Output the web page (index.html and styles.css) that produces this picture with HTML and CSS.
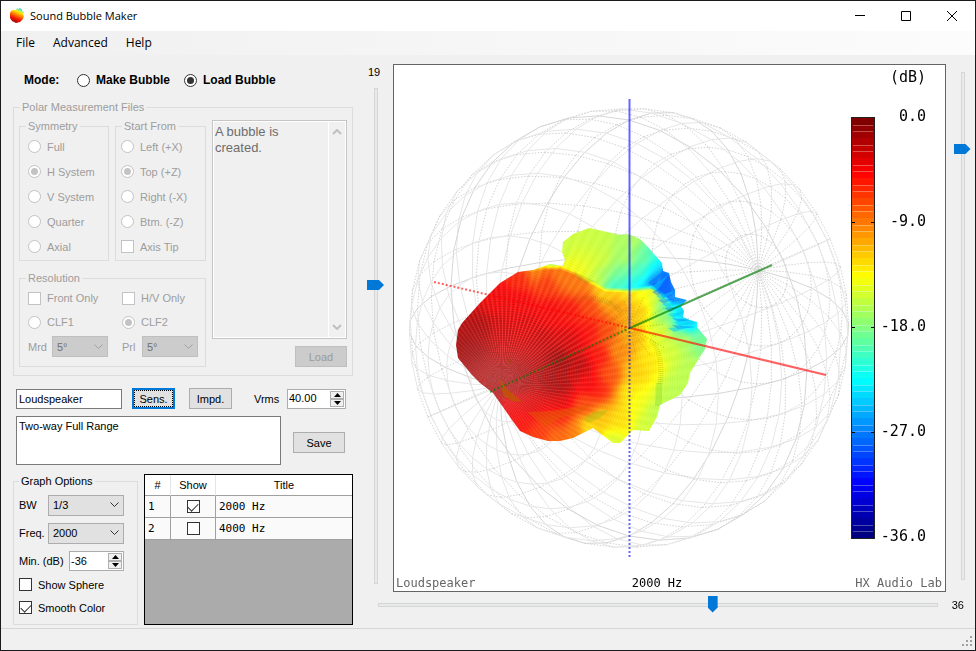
FILE: index.html
```html
<!DOCTYPE html>
<html lang="en">
<head>
<meta charset="utf-8">
<title>Sound Bubble Maker</title>
<link rel="stylesheet" href="styles.css">
</head>
<body>
<div class="window">
  <header class="titlebar">
    <svg class="app-icon" width="16" height="16" viewBox="0 0 16 16" aria-hidden="true">
      <defs>
        <linearGradient id="appFill" x1="0.75" y1="0" x2="0.35" y2="1">
          <stop offset="0" stop-color="#20c0f0"/><stop offset=".14" stop-color="#80f0a0"/>
          <stop offset=".28" stop-color="#ffe800"/><stop offset=".5" stop-color="#ff7a00"/>
          <stop offset=".72" stop-color="#f01808"/><stop offset="1" stop-color="#a00000"/>
        </linearGradient>
      </defs>
      <path fill="url(#appFill)" d="M2 3 4 2 7 2 8 0 9 1 11 0 12 1 13 1 13 3 15 4 14 6 15 8 14 11 11 14 7 15 3 13 1 10 1 5Z"/>
    </svg>
    <h1 class="title">Sound Bubble Maker</h1>
    <div class="caption-buttons">
      <button type="button" aria-label="Minimize"><svg width="12" height="12"><path d="M1 5.500h10"/></svg></button>
      <button type="button" aria-label="Maximize"><svg width="12" height="12"><path d="M1.500 1.500h9v9h-9z"/></svg></button>
      <button type="button" aria-label="Close"><svg width="12" height="12"><path d="M1 1l10 10M11 1L1 11"/></svg></button>
    </div>
  </header>
  <nav class="menubar">
    <button type="button">File</button>
    <button type="button">Advanced</button>
    <button type="button">Help</button>
  </nav>
  <main class="workspace">
    <form class="controls">
      <div class="mode" role="radiogroup" aria-labelledby="modeLabel">
        <span id="modeLabel" class="mode-label">Mode:</span>
        <label><input type="radio" name="mode">Make Bubble</label>
        <label><input type="radio" name="mode" checked>Load Bubble</label>
      </div>

      <fieldset class="group polar" disabled>
        <legend>Polar Measurement Files</legend>
        <div class="polar-grid">
          <div class="polar-options">
            <fieldset class="group">
              <legend>Symmetry</legend>
              <label><input type="radio" name="sym">Full</label>
              <label><input type="radio" name="sym" checked>H System</label>
              <label><input type="radio" name="sym">V System</label>
              <label><input type="radio" name="sym">Quarter</label>
              <label><input type="radio" name="sym">Axial</label>
            </fieldset>
            <fieldset class="group start">
              <legend>Start From</legend>
              <label><input type="radio" name="start">Left (+X)</label>
              <label><input type="radio" name="start" checked>Top (+Z)</label>
              <label><input type="radio" name="start">Right (-X)</label>
              <label><input type="radio" name="start">Btm. (-Z)</label>
              <label><input type="checkbox">Axis Tip</label>
            </fieldset>
            <fieldset class="group resolution">
              <legend>Resolution</legend>
              <label><input type="checkbox">Front Only</label>
              <label><input type="checkbox">H/V Only</label>
              <label><input type="radio" name="clf">CLF1</label>
              <label><input type="radio" name="clf" checked>CLF2</label>
              <div class="pick"><label for="mrd">Mrd</label><select id="mrd"><option>5°</option></select></div>
              <div class="pick"><label for="prl">Prl</label><select id="prl"><option>5°</option></select></div>
            </fieldset>
          </div>
          <div class="log">
            <div class="log-box">
              <textarea aria-label="Messages" readonly>A bubble is created.</textarea>
              <div class="log-scroll" aria-hidden="true">
                <svg width="10" height="6"><path d="M1 5l4-4 4 4"/></svg>
                <svg width="10" height="6"><path d="M1 1l4 4 4-4"/></svg>
              </div>
            </div>
            <button type="button" class="btn btn-wide">Load</button>
          </div>
        </div>
      </fieldset>

      <div class="name-row">
        <input class="field name-field" type="text" value="Loudspeaker" aria-label="Name">
        <button type="button" class="btn btn-focus">Sens.</button>
        <button type="button" class="btn">Impd.</button>
        <label for="vrms">Vrms</label>
        <span class="spinner">
          <input id="vrms" type="text" value="40.00">
          <span class="steps">
            <button type="button" aria-label="Increase voltage"><svg width="7" height="4"><path d="M0 4L3.500 0L7 4Z"/></svg></button>
            <button type="button" aria-label="Decrease voltage"><svg width="7" height="4"><path d="M0 0L3.500 4L7 0Z"/></svg></button>
          </span>
        </span>
      </div>
      <div class="note-row">
        <textarea class="field note" aria-label="Description">Two-way Full Range</textarea>
        <button type="button" class="btn btn-wide">Save</button>
      </div>

      <div class="bottom-row">
        <fieldset class="group graph-options">
          <legend>Graph Options</legend>
          <div class="option"><label for="bw">BW</label><select id="bw"><option>1/3</option></select></div>
          <div class="option"><label for="freq">Freq.</label><select id="freq"><option>2000</option></select></div>
          <div class="option">
            <label for="min">Min. (dB)</label>
            <span class="spinner spinner-small">
              <input id="min" type="text" value="-36">
              <span class="steps">
                <button type="button" aria-label="Increase minimum"><svg width="7" height="4"><path d="M0 4L3.500 0L7 4Z"/></svg></button>
                <button type="button" aria-label="Decrease minimum"><svg width="7" height="4"><path d="M0 0L3.500 4L7 0Z"/></svg></button>
              </span>
            </span>
          </div>
          <label><input type="checkbox">Show Sphere</label>
          <label><input type="checkbox" checked>Smooth Color</label>
        </fieldset>
        <div class="list">
          <table>
            <thead><tr><th class="col-num">#</th><th class="col-show">Show</th><th>Title</th></tr></thead>
            <tbody>
              <tr><td>1</td><td class="tick"><input type="checkbox" checked aria-label="Show 2000 Hz"></td><td>2000 Hz</td></tr>
              <tr><td>2</td><td class="tick"><input type="checkbox" aria-label="Show 4000 Hz"></td><td>4000 Hz</td></tr>
            </tbody>
          </table>
        </div>
      </div>
    </form>

    <div class="side-slider">
      <label for="elevation">19</label>
      <input id="elevation" class="slider vertical" type="range" min="-90" max="90" value="19">
    </div>

    <section class="plot" aria-label="Sound bubble">
      <canvas id="bubble" width="551" height="526"></canvas>
      <svg viewBox="394 65 551 526" role="img" aria-label="Axes and level scale">
        <g class="axes">
          <path class="axis-x dotted" d="M434 282 630 328"/>
          <path class="axis-y dotted" d="M490 392 630 328"/>
          <path class="axis-z dotted" d="M629.500 557V328"/>
          <path class="axis-x" d="M630 328 826 375"/>
          <path class="axis-y" d="M630 328 772 265"/>
          <path class="axis-z" d="M629.500 328V99"/>
        </g>
        <g id="scale"></g>
        <g class="scale-text">
          <text x="926" y="82">(dB)</text>
          <text x="926" y="121">0.0</text>
          <text x="926" y="226">-9.0</text>
          <text x="926" y="331">-18.0</text>
          <text x="926" y="436">-27.0</text>
          <text x="926" y="541">-36.0</text>
        </g>
        <g class="caption-text">
          <text x="396" y="587">Loudspeaker</text>
          <text class="strong" x="657" y="587" text-anchor="middle">2000 Hz</text>
          <text x="942" y="587" text-anchor="end">HX Audio Lab</text>
        </g>
      </svg>
    </section>

    <div class="side-slider zoom">
      <input class="slider vertical" type="range" min="0" max="1000" value="857" aria-label="Zoom">
    </div>

    <div class="bottom-slider">
      <input id="azimuth" class="slider horizontal" type="range" min="-180" max="180" value="36">
      <label for="azimuth">36</label>
    </div>
  </main>
  <footer class="statusbar">
    <svg width="12" height="12" aria-hidden="true"><path d="M8 0h2v2h-2zM4 4h2v2h-2zM8 4h2v2h-2zM0 8h2v2h-2zM4 8h2v2h-2zM8 8h2v2h-2z"/></svg>
  </footer>
</div>
<script src="script.js"></script>
</body>
</html>
```
FILE: styles.css
```css
* { box-sizing: border-box; }
body {
  margin: 0;
  font: 11px/14px "Liberation Sans", Arial, sans-serif;
  color: #000;
  background: #f0f0f0;
}
button, input, select, textarea { font: inherit; color: inherit; margin: 0; }
.window {
  min-height: 100vh;
  border: 1px solid #1b1a1e;
  display: flex;
  flex-direction: column;
}

/* title bar and menu */
.titlebar { display: flex; align-items: center; height: 30px; padding-left: 8px; background: #fff; }
.title { flex: 1; margin: 0 0 0 5px; font: 11px/16px "Open Sans", "Noto Sans", sans-serif; }
.caption-buttons { display: flex; }
.caption-buttons button { width: 46px; height: 30px; padding: 0; border: 0; background: none; display: grid; place-items: center; }
.caption-buttons path { fill: none; stroke: #000; }
.menubar { display: flex; height: 24px; padding-left: 7px; background: linear-gradient(to right, #f0f0f0, #fcfcfc); }
.menubar button { border: 0; padding: 0 8px; margin-right: 2px; background: none; font: 12px/16px "Open Sans", "Noto Sans", sans-serif; }

.workspace {
  flex: 1;
  display: grid;
  grid-template-columns: 352px 40px minmax(0, 1fr) 29px;
  grid-template-rows: auto 1fr;
  align-items: start;
}
.controls { grid-row: 1 / 3; padding: 15px 0 0 12px; }

/* tick boxes and radios */
label { display: flex; align-items: center; }
input[type="radio"], input[type="checkbox"] {
  appearance: none;
  flex: none;
  width: 13px;
  height: 13px;
  margin-right: 6px;
  border: 1px solid #333;
  background: #fff;
  display: grid;
  place-items: center;
}
input[type="radio"] { border-radius: 50%; }
input[type="radio"]:checked::before { content: ""; width: 7px; height: 7px; border-radius: 50%; background: #333; }
input[type="checkbox"]:checked::before {
  content: "";
  width: 9px;
  height: 5px;
  border: solid #333;
  border-width: 0 0 1px 1px;
  transform: translateY(-1px) rotate(-45deg);
}
:disabled input[type="radio"], :disabled input[type="checkbox"] { border-color: #c3c3c3; }
:disabled input[type="radio"]:checked::before { background: #c3c3c3; }

.mode { display: flex; align-items: center; height: 20px; padding-left: 11px; font-weight: bold; font-size: 12px; }
.mode-label { width: 53px; }
.mode label { margin-right: 14px; }

.group { margin: 0; min-width: 0; border: 1px solid #dcdcdc; padding: 1px 8px 0; }
.group legend { padding: 0 2px; margin: 0 -2px; line-height: 14px; }
.group:disabled, .group:disabled .group { color: #9d9d9d; }
.polar { margin-top: 10px; padding: 5px 5px 8px; }
.polar > legend { margin: 0 0 0 1px; }
.polar-grid { display: grid; grid-template-columns: 187px minmax(0, 1fr); gap: 6px; }
.polar-options { display: grid; grid-template-columns: 90px 91px; gap: 10px 6px; }
.polar-options label { height: 25px; white-space: nowrap; }
.start { padding-left: 5px; }
.start legend { margin-left: 1px; }
.polar-options .resolution { grid-column: 1 / 3; display: grid; grid-template-columns: 94px 1fr; padding: 1px 7px 7px 8px; }
.resolution label { height: 24px; }
.pick { display: flex; align-items: center; justify-content: space-between; height: 24px; }
.pick:nth-of-type(1) { padding-right: 14px; }

select {
  appearance: none;
  width: 56px;
  height: 21px;
  padding: 0 4px;
  border: 1px solid #adadad;
  border-radius: 0;
  background-color: #e1e1e1;
  background-image: url("data:image/svg+xml,%3Csvg xmlns='http://www.w3.org/2000/svg' width='9' height='6'%3E%3Cpath d='M.5 .5l4 4 4-4' fill='none' stroke='%23333'/%3E%3C/svg%3E");
  background-repeat: no-repeat;
  background-position: right 4px center;
  font-size: 11px;
}
select:disabled {
  background-color: #ccc;
  background-image: url("data:image/svg+xml,%3Csvg xmlns='http://www.w3.org/2000/svg' width='9' height='6'%3E%3Cpath d='M.5 .5l4 4 4-4' fill='none' stroke='%23a0a0a0'/%3E%3C/svg%3E");
  border-color: #bfbfbf;
  color: #707070;
  opacity: 1;
}

.log { display: flex; flex-direction: column; align-items: flex-end; gap: 7px; padding-top: 1px; }
.log-box { display: flex; width: 100%; height: 219px; border: 1px solid #c5c5c5; padding: 1px; box-shadow: inset 0 0 0 1px #fff; }
.log-box textarea { flex: 1; min-width: 0; border: 0; padding: 2px 1px; resize: none; background: none; font-size: 13px; line-height: 16px; color: #6d6d6d; overflow: hidden; }
.log-scroll { width: 17px; border-left: 1px solid #fff; display: flex; flex-direction: column; justify-content: space-between; align-items: center; padding: 7px 0; }
.log-scroll path { fill: none; stroke: #bfbfbf; stroke-width: 2; }

.btn { height: 21px; width: 43px; padding: 0; border: 1px solid #adadad; background: #e1e1e1; }
.btn-wide { width: 52px; }
.btn:disabled { background: #ccc; border-color: #bfbfbf; color: #9a9a9a; }
.btn-focus { border: 2px solid #0078d7; outline: 1px dotted #000; outline-offset: -3px; }
.field { border: 1px solid #7a7a7a; background: #fff; padding: 0 2px; }

.name-row { display: flex; align-items: center; margin-top: 12px; padding-left: 3px; }
.name-field { width: 106px; height: 20px; margin-right: 10px; }
.name-row .btn { margin-right: 14px; }
.name-row label { width: 33px; margin-left: 8px; }
.spinner { display: flex; width: 59px; height: 20px; border: 1px solid #adadad; background: #fff; padding: 1px; }
.spinner-small { width: 55px; }
.spinner input { flex: 1; min-width: 0; width: 0; border: 0; padding: 0 0 1px; background: none; font-size: 11px; }
.steps { display: flex; flex-direction: column; width: 14px; }
.steps button { flex: 1; min-height: 0; padding: 0; border: 1px solid #b0b0b0; background: #f0f0f0; display: grid; place-items: center; line-height: 0; }

.note-row { display: flex; align-items: flex-end; gap: 12px; margin-top: 7px; padding-left: 3px; }
.note-row .btn { margin-bottom: 12px; }
.note { width: 265px; height: 49px; padding: 2px; resize: none; display: block; }

.bottom-row { display: flex; align-items: stretch; gap: 6px; margin-top: 9px; }
.graph-options { width: 125px; padding: 3px 5px 5px; }
.graph-options > legend { margin-left: 0; }
.option { display: flex; align-items: center; justify-content: space-between; height: 28px; padding-right: 8px; }
.option select { width: 76px; }
.graph-options > label { height: 23px; }
.option + label { margin-top: -2px; }
.list { flex: 1; border: 1px solid #000; background: #ababab; }
.list table { width: 100%; border-collapse: separate; border-spacing: 0; table-layout: fixed; }
.list th { height: 21px; padding: 0; background: #fff; font-weight: normal; border-right: 1px solid #e5e5e5; border-bottom: 1px solid #a0a0a0; }
.list td { height: 22px; padding: 0 3px; background: #fafafa; font: 11px/14px "DejaVu Sans Mono", monospace; border-right: 1px solid #a0a0a0; border-bottom: 1px solid #a0a0a0; }
.list tr > :last-child { border-right: 0; }
.col-num { width: 26px; }
.col-show { width: 45px; }
.list .tick input { margin: 0 auto; }

/* sliders */
.slider { appearance: none; margin: 0; background: none; display: block; }
.slider::-webkit-slider-runnable-track { background: #e7eaea; border: 1px solid #d6d6d6; }
.slider::-webkit-slider-thumb { appearance: none; background: #0078d7; }
.vertical { writing-mode: vertical-lr; direction: rtl; width: 17px; }
.vertical::-webkit-slider-runnable-track { width: 4px; }
.vertical::-webkit-slider-thumb { width: 17px; height: 10px; margin-left: -8px; clip-path: polygon(0 0, 12px 0, 100% 50%, 12px 100%, 0 100%); }
.horizontal { height: 17px; flex: 1; min-width: 0; }
.horizontal::-webkit-slider-runnable-track { height: 4px; }
.horizontal::-webkit-slider-thumb { width: 10px; height: 17px; margin-top: -8px; clip-path: polygon(0 0, 100% 0, 100% 12px, 50% 100%, 0 12px); }
.side-slider { display: flex; flex-direction: column; align-items: center; align-self: stretch; padding: 10px 0 8px 6px; gap: 9px; font-size: 11px; }
.side-slider .slider { flex: 1; min-height: 0; }
.side-slider label { margin-right: 4px; }
.side-slider.zoom { padding: 17px 0 12px 4px; }
.bottom-slider { grid-column: 2 / 5; display: flex; align-items: center; gap: 14px; padding: 4px 11px 0 25px; font-size: 11px; }

/* plot */
.plot { display: grid; margin-top: 9px; border: 1px solid #646464; background: #fff; }
.plot canvas, .plot svg { grid-area: 1 / 1; display: block; width: 100%; height: auto; }
.axes path { fill: none; stroke-width: 2; }
.axes .dotted { stroke-dasharray: 2 2; }
.axis-x { stroke: #ff0000; stroke-opacity: .62; }
.axis-y { stroke: #007d00; stroke-opacity: .66; }
.axis-z { stroke: #0000ff; stroke-opacity: .6; }
.scale-text text { font: 15px "DejaVu Sans Mono", monospace; text-anchor: end; }
.caption-text text { font: 12px "DejaVu Sans Mono", monospace; fill: #666; }
.caption-text .strong { fill: #000; }

.statusbar { display: flex; justify-content: flex-end; align-items: flex-end; height: 22px; border-top: 1px solid #d7d7d7; padding: 0 1px 2px; }
.statusbar path { fill: #a0a0a0; }
```
FILE: script.js
```js
// Colour map: level 0 (loudest) to 36 dB down, dark red through blue.
function jet(level) {
  const t = 1 - level / 36;
  const ramp = (c) => Math.max(0, Math.min(1, 1.5 - Math.abs(4 * t - c))) * 255;
  return [ramp(3), ramp(2), ramp(1)];
}

const canvas = document.getElementById('bubble');
const ctx = canvas.getContext('2d');
const OX = 394, OY = 65;
ctx.translate(-OX, -OY);

// Orthographic view of the reference sphere.
const AZ = 36 * Math.PI / 180, EL = 19 * Math.PI / 180, R = 220, CX = 629, CY = 328;
function project(x, y, z) {
  const px = x * Math.cos(AZ) + y * Math.sin(AZ);
  const depth = x * Math.sin(AZ) - y * Math.cos(AZ);
  return {
    x: CX + R * px,
    y: CY + R * (depth * Math.sin(EL) - z * Math.cos(EL)),
    front: depth * Math.cos(EL) + z * Math.sin(EL) > 0
  };
}
function polyline(fn, strong) {
  for (let i = 0; i < 36; i++) {
    const a = project(...fn(i * 10)), b = project(...fn(i * 10 + 10));
    const front = a.front && b.front;
    ctx.beginPath();
    ctx.moveTo(a.x, a.y);
    ctx.lineTo(b.x, b.y);
    ctx.setLineDash(strong || front ? [] : [1.5, 1.5]);
    ctx.strokeStyle = strong ? '#d6d6d6' : front ? '#e6e6e6' : '#d2d2d2';
    ctx.lineWidth = 1;
    ctx.stroke();
  }
}
const s = (d) => Math.sin(d * Math.PI / 180), c = (d) => Math.cos(d * Math.PI / 180);
for (let m = 0; m < 180; m += 10) {
  polyline((t) => [s(t) * c(m), c(t), s(t) * s(m)], m % 90 === 0);
}
for (let p = 10; p < 180; p += 10) {
  polyline((t) => [s(p) * c(t), c(p), s(p) * s(t)], p === 90);
}

// Bubble silhouette.
const outline = [563,242,573,234,589,228,603,231,620,235,628,234,640,239,648,247,653,253,662,263,
  663,271,669,273,671,282,675,290,675,297,687,300,681,306,684,311,683,317,690,320,697,322,697,327,
  707,339,705,349,690,373,688,383,680,395,660,405,657,417,649,431,633,430,626,437,620,443,613,443,
  605,437,593,428,587,431,573,438,560,441,548,441,533,437,520,431,512,420,503,407,493,393,480,383,
  472,375,458,358,456,345,458,330,462,323,480,303,500,283,518,272,533,270,550,264,563,266,565,260,562,252];

// Level samples: x, y, dB down. The rear lobe rises behind the main body.
const body = [500,385,1,470,350,1,480,330,1.5,560,360,.8,580,365,2,560,385,1.4,540,340,2.6,520,300,4.2,
  500,300,4,500,330,3,545,283,6,520,279,5.5,570,310,4.8,590,330,4.6,600,355,4.8,588,305,6.5,605,330,6.8,620,305,9.5,
  575,283,8.5,560,274,8.5,598,388,5.2,610,375,7,618,350,9.2,632,335,10.8,640,310,11.3,650,360,12.6,630,390,12.7,
  620,420,12.3,600,418,11.5,613,440,15,645,425,15.3,660,330,14.5,670,350,15,690,370,16,680,385,16,705,345,18,
  700,335,19,690,324,25,680,314,25,665,318,17,675,300,24,665,300,20,655,298,14.5,
  603,292,12,625,295,12.6,645,294,13.5,535,272,9,520,420,4.8,540,432,6.2,555,437,8,
  575,430,8.5,587,427,13,560,415,5.6,530,405,3.6,510,405,4.4,560,403,3.2,585,405,6.8,655,410,16,640,400,14,
  670,395,16,685,340,16,550,380,1.2,520,380,1.2,635,370,11.8,525,325,3.4,550,310,4.4,570,340,3,590,385,3.8];
const lobe = [580,240,15.3,575,255,14.6,600,240,15.5,630,240,16.3,625,258,16.3,600,258,15.2,645,258,18,652,258,21,
  566,250,15.6,570,264,13.5,582,270,13.8,596,280,15,590,262,14.6,657,266,24,665,277,29,652,282,28,665,290,29,
  641,273,20,630,283,21.5,612,285,21,603,275,17,675,295,26,625,272,18.5,640,286,23,550,268,17,540,269,14,530,272,10];
function levelAt(list, x, y) {
  let sum = 0, weight = 0;
  for (let i = 0; i < list.length; i += 3) {
    const d = (x - list[i]) ** 2 + (y - list[i + 1]) ** 2 + 100;
    const w = 1 / (d * d);
    sum += w * list[i + 2];
    weight += w;
  }
  return sum / weight;
}
// Crest of the main body, below which it hides the rear lobe.
const crest = [454,226,515,260,530,270,545,267,560,267,575,273,590,282,605,289,630,290,652,287,662,294,672,303,710,306];
function crestY(x) {
  for (let i = 2; i < crest.length; i += 2) {
    if (x <= crest[i]) {
      const t = (x - crest[i - 2]) / (crest[i] - crest[i - 2]);
      return crest[i - 1] + t * (crest[i + 1] - crest[i - 1]);
    }
  }
  return 306;
}

ctx.save();
ctx.beginPath();
for (let i = 0; i < outline.length; i += 2) ctx.lineTo(outline[i], outline[i + 1]);
ctx.closePath();
ctx.clip();
const PX = 501, PY = 384;
for (let y = 226; y < 446; y++) {
  for (let x = 454; x < 710; x++) {
    const k = Math.max(0, Math.min(1, (y - crestY(x)) / 5 + .5));
    const level = k * levelAt(body, x, y) + (1 - k) * levelAt(lobe, x, y);
    const rgb = jet(level);
    const dx = x - PX, dy = y - PY, r = Math.hypot(dx, dy), a = Math.atan2(dy, dx);
    // Mesh lines fan out from the front pole and ring around it.
    const spokes = Math.sin(a * 110 + r * .05);
    const rings = Math.sin(r * 2.6 + Math.sin(a * 3) * 9);
    const red = Math.exp(-(((x - 525) / 65) ** 2) - ((y - 348) / 60) ** 2);
    const shade = 1 + (spokes * .1 + rings * .12) * (.15 + red);
    const haze = .55 * Math.exp(-((x - 495) ** 2) / 2400 - ((y - 378) ** 2) / 1300);
    const light = (Math.max(0, spokes) * .1 * (.3 + red) + .07) * (1 - haze);
    const out = rgb.map((v, i) => {
      const base = v * shade * (1 - haze) + (i ? 100 : 200) * haze;
      return Math.round(Math.min(255, base + (255 - base) * light));
    });
    ctx.fillStyle = `rgb(${out})`;
    ctx.fillRect(x, y, 1, 1);
  }
}

// Folds and shadows.
function patch(points, fill) {
  ctx.beginPath();
  for (let i = 0; i < points.length; i += 2) ctx.lineTo(points[i], points[i + 1]);
  ctx.fillStyle = fill;
  ctx.fill();
}
patch([500,379,506,388,513,394,522,402,512,401,504,396,501,388], 'rgba(190,90,0,.75)');
patch([507,357,511,362,512,364,508,362], 'rgba(150,70,0,.6)');
patch([527,412,550,411,570,408,591,405,580,413,560,418,545,427], 'rgba(225,95,0,.45)');
patch([584,418,594,412,609,410,600,418,588,423], 'rgba(160,190,20,.4)');
patch([656,383,662,383,662,406,655,406], 'rgba(90,200,40,.25)');
patch([662,268,668,276,671,290,664,299,656,290,653,283,660,283], 'rgba(0,100,255,.45)');
patch([574,272,582,275,596,282,585,283,576,278], 'rgba(150,150,20,.25)');
ctx.lineWidth = 1;
for (let i = 0; i < 30; i++) {
  const a = i * Math.PI / 15 + .1;
  const len = 16 + (i * 7 % 5) * 6;
  ctx.setLineDash([1, 2]);
  ctx.strokeStyle = 'rgba(90,90,10,.32)';
  ctx.beginPath();
  ctx.moveTo(630 + 5 * Math.cos(a), 328 + 5 * Math.sin(a));
  ctx.lineTo(630 + len * Math.cos(a), 328 + len * Math.sin(a));
  ctx.stroke();
}
ctx.setLineDash([1, 1]);
ctx.strokeStyle = 'rgba(110,110,20,.2)';
ctx.lineWidth = 5;
ctx.beginPath();
ctx.moveTo(575, 301);
ctx.quadraticCurveTo(600, 292, 622, 312);
ctx.moveTo(650, 340);
ctx.quadraticCurveTo(664, 352, 660, 384);
ctx.stroke();
// Ragged nulls on the far side.
const nulls = [648,283,663,271, 650,288,669,274, 652,292,671,283, 656,296,675,291, 658,300,675,298,
  662,304,686,300, 664,308,681,306, 668,314,684,312, 672,318,690,320, 674,322,697,323, 672,325,696,327, 668,328,694,326];
ctx.setLineDash([]);
for (let i = 0; i < nulls.length; i += 4) {
  const [x1, y1, x2, y2] = nulls.slice(i, i + 4);
  patch([x1, y1, x2, y2, x1 + 6, y1 + 4], (i / 4) % 2 ? 'rgba(0,200,255,.5)' : 'rgba(0,100,250,.4)');
}
ctx.restore();

// Level scale.
const scale = document.getElementById('scale');
const rect = (x, y, w, h, fill) => {
  const el = document.createElementNS('http://www.w3.org/2000/svg', 'rect');
  Object.entries({ x, y, width: w, height: h, fill }).forEach(([k, v]) => el.setAttribute(k, v));
  scale.append(el);
};
rect(851, 117, 24, 422, '#222');
for (let i = 0; i < 63; i++) {
  const y = Math.round(118 + i * 6.667), next = Math.round(118 + (i + 1) * 6.667);
  const rgb = jet(i * 36 / 62).map(Math.round);
  rect(852, y, 22, next - y, `rgb(${rgb})`);
  if (i % 3) rect(853, y, 20, 1, 'rgba(255,255,255,.3)');
}
for (let i = 1; i < 4; i++) {
  rect(852, 117 + i * 105, 3, 1, '#000');
  rect(871, 117 + i * 105, 3, 1, '#000');
}
```
